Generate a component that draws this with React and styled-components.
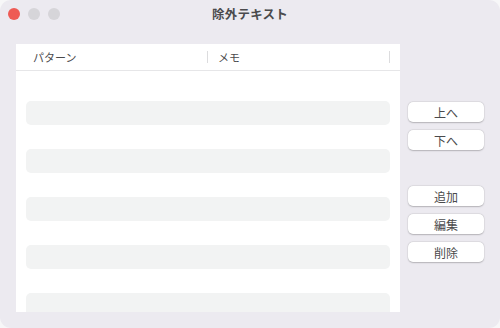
import React from "react";
import styled, { createGlobalStyle } from "styled-components";

const Global = createGlobalStyle`
  html, body { margin: 0; padding: 0; background: #f7f7f8; }
  body { font-family: "Noto Sans CJK JP", "Noto Sans", sans-serif; }
`;

const Window = styled.div`
  width: 500px;
  height: 328px;
  box-sizing: border-box;
  background: #eceaf0;
  border-radius: 11px;
  display: flex;
  flex-direction: column;
  overflow: hidden;
`;

const TitleBar = styled.div`
  position: relative;
  height: 28px;
  flex-shrink: 0;
  display: flex;
  align-items: center;
  justify-content: center;
`;

const Lights = styled.div`
  position: absolute;
  left: 8px;
  top: 8px;
  display: flex;
  gap: 8px;
`;

const Light = styled.span`
  width: 12px;
  height: 12px;
  border-radius: 50%;
  background: ${(p) => p.$color};
`;

const Title = styled.div`
  font-size: 12.5px;
  font-weight: 700;
  color: #4a4a4c;
  letter-spacing: 0.2px;
  margin-top: -1px;
`;

const Body = styled.div`
  flex: 1;
  display: flex;
  padding: 16px;
  gap: 8px;
  min-height: 0;
`;

const Table = styled.div`
  width: 384px;
  background: #ffffff;
  display: flex;
  flex-direction: column;
  overflow: hidden;
`;

const Header = styled.div`
  height: 27px;
  flex-shrink: 0;
  box-sizing: border-box;
  border-bottom: 1px solid #e6e6e8;
  display: grid;
  grid-template-columns: 192px 182px 10px;
  align-items: center;
`;

const HeadCell = styled.div`
  display: flex;
  align-items: center;
  padding-left: ${(p) => p.$pad}px;
  font-size: 11px;
  color: #4a4a4c;
  border-right: ${(p) => (p.$divider ? "1px solid #dcdcde" : "none")};
  box-sizing: border-box;
  height: 12px;
  line-height: 12px;
`;

const Rows = styled.div`
  display: flex;
  flex-direction: column;
  gap: 24px;
  padding: 30px 10px 0 10px;
`;

const Row = styled.div`
  height: 24px;
  border-radius: 5px;
  background: #f2f3f3;
  flex-shrink: 0;
`;

const Side = styled.div`
  width: 76px;
  padding-top: 58px;
  display: flex;
  flex-direction: column;
  gap: 8px;
`;

const Spacer = styled.div`
  height: 20px;
`;

const Button = styled.button`
  height: 20px;
  width: 76px;
  border: none;
  border-radius: 5px;
  background: #ffffff;
  box-shadow: 0 0.5px 1.5px rgba(0, 0, 0, 0.22), 0 0 0 0.5px rgba(0, 0, 0, 0.05);
  font-family: "Noto Sans CJK JP", "Noto Sans", sans-serif;
  font-size: 12px;
  color: #4a4a4c;
  padding: 0;
  display: flex;
  align-items: center;
  justify-content: center;
`;

export default function App() {
  return (
    <>
      <Global />
      <Window>
        <TitleBar>
          <Lights>
            <Light $color="#ee5b55" />
            <Light $color="#d6d5d9" />
            <Light $color="#d6d5d9" />
          </Lights>
          <Title>除外テキスト</Title>
        </TitleBar>
        <Body>
          <Table>
            <Header>
              <HeadCell $pad={17} $divider>パターン</HeadCell>
              <HeadCell $pad={10} $divider>メモ</HeadCell>
              <HeadCell $pad={0} />
            </Header>
            <Rows>
              <Row />
              <Row />
              <Row />
              <Row />
              <Row />
            </Rows>
          </Table>
          <Side>
            <Button>上へ</Button>
            <Button>下へ</Button>
            <Spacer />
            <Button>追加</Button>
            <Button>編集</Button>
            <Button>削除</Button>
          </Side>
        </Body>
      </Window>
    </>
  );
}
